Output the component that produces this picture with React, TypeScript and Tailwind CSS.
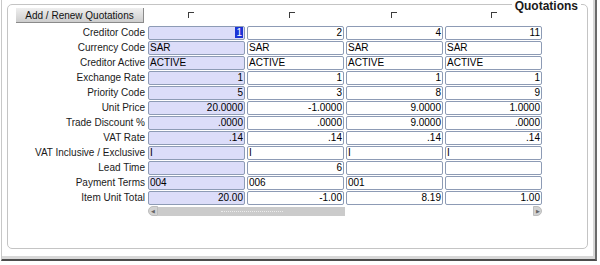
type Cell = { v: string; right?: boolean; sel?: boolean };

const rows: { label: string; right: boolean; values: string[] }[] = [
  { label: "Creditor Code", right: true, values: ["1", "2", "4", "11"] },
  { label: "Currency Code", right: false, values: ["SAR", "SAR", "SAR", "SAR"] },
  { label: "Creditor Active", right: false, values: ["ACTIVE", "ACTIVE", "ACTIVE", "ACTIVE"] },
  { label: "Exchange Rate", right: true, values: ["1", "1", "1", "1"] },
  { label: "Priority Code", right: true, values: ["5", "3", "8", "9"] },
  { label: "Unit Price", right: true, values: ["20.0000", "-1.0000", "9.0000", "1.0000"] },
  { label: "Trade Discount %", right: true, values: [".0000", ".0000", "9.0000", ".0000"] },
  { label: "VAT Rate", right: true, values: [".14", ".14", ".14", ".14"] },
  { label: "VAT Inclusive / Exclusive", right: false, values: ["I", "I", "I", "I"] },
  { label: "Lead Time", right: true, values: ["", "6", "", ""] },
  { label: "Payment Terms", right: false, values: ["004", "006", "001", ""] },
  { label: "Item Unit Total", right: true, values: ["20.00", "-1.00", "8.19", "1.00"] },
];

const markOffsets = ["ml-[40px]", "ml-[42px]", "ml-[45px]", "ml-[46px]"];

function Field({ cell, first }: { cell: Cell; first: boolean }) {
  return (
    <div
      className={`h-[14px] border border-[#8d9bb5] rounded-[2px] px-[1px] text-[10px] leading-[12px] text-black overflow-hidden whitespace-nowrap ${
        first ? "bg-[#dcddf9]" : "bg-white"
      } ${cell.right ? "text-right" : "text-left"}`}
    >
      {cell.sel ? <span className="bg-[#1b34d6] text-white px-[1px]">{cell.v}</span> : cell.v}
    </div>
  );
}

export default function App() {
  return (
    <div
      className="w-[600px] h-[265px] bg-white pl-[1px]"
      style={{ fontFamily: '"Liberation Sans", Arial, sans-serif' }}
    >
      <div className="w-[596px] h-[261px] border-l border-l-[#c8c8c8] border-r-2 border-r-[#6c6c6c] border-b-2 border-b-[#4c4c4c] shadow-[inset_-2px_-3px_0_#d8d8d8] pl-[5px] pt-[4px]">
        <div className="relative w-[581px] h-[245px] border border-[#c4c4c4] rounded-[5px] pt-[3px]">
          <div className="absolute -top-[5px] right-[6px] bg-white px-[3px] text-[12px] leading-[13px] font-bold text-[#1a1a1a]">
            Quotations
          </div>

          <div className="grid grid-cols-[138px_97px_97px_97px_97px] gap-x-[2px] gap-y-[1px]">
            {/* header row */}
            <div className="h-[17px] pl-[8px]">
              <button className="block w-[128px] h-[15px] bg-linear-to-b from-[#efefef] to-[#cdcdcd] border-r border-b border-[#8a8a8a] text-[10px] leading-[13px] text-[#111]">
                Add / Renew Quotations
              </button>
            </div>
            {markOffsets.map((m, i) => (
              <div key={i} className="h-[17px] pt-[4px]">
                <div className={`${m} w-[6px] h-[6px] border-t border-l border-[#3c3c3c]`} />
              </div>
            ))}

            {rows.map((r, ri) => (
              <div key={r.label} className="contents">
                <div className="h-[14px] pr-[1px] text-right text-[10px] leading-[14px] text-[#1a1a1a] whitespace-nowrap">
                  {r.label}
                </div>
                {r.values.map((v, ci) => (
                  <Field key={ci} first={ci === 0} cell={{ v, right: r.right, sel: ri === 0 && ci === 0 }} />
                ))}
              </div>
            ))}

            {/* scrollbar */}
            <div />
            <div className="col-span-4 h-[10px] flex items-center">
              <div className="w-[10px] h-[10px] rounded-l-full bg-[#d2d2d2] border border-[#bdbdbd] flex items-center justify-center text-[5px] leading-none text-[#666]">
                ◀
              </div>
              <div className="w-[187px] h-[9px] bg-[#cbcbcb] flex items-center justify-center">
                <div className="w-[62px] border-t border-dotted border-[#ececec]" />
              </div>
              <div className="ml-auto w-[9px] h-[10px] rounded-r-full bg-[#d2d2d2] border border-[#bdbdbd] flex items-center justify-center text-[5px] leading-none text-[#666]">
                ▶
              </div>
            </div>
          </div>
        </div>
      </div>
    </div>
  );
}
